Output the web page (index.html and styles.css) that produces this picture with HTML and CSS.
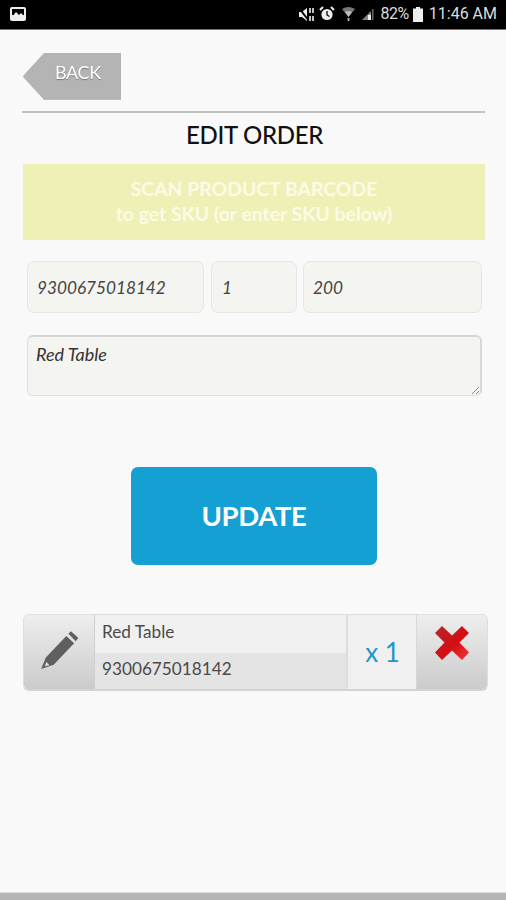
FILE: index.html
```html
<!DOCTYPE html>
<html lang="en">
<head>
<meta charset="utf-8">
<title>Edit Order</title>
<link rel="stylesheet" href="styles.css">
</head>
<body>
<div class="screen">
  <header class="status">
    <svg class="status-pic" width="18" height="16" viewBox="0 0 18 16"><rect x="1" y="1" width="16" height="14" rx="2" fill="#eee"/><rect x="3" y="3" width="12" height="6" fill="#000"/><path d="M3 11 L7 6 L10 9 L12 7 L15 10 V12 H3Z" fill="#eee"/></svg>
    <div class="status-right">
      <svg class="si-mute" width="17" height="15" viewBox="0 0 17 15"><path d="M1 5h3l5-4v13L4 10H1Z" fill="#eee"/><path d="M1 1 L11 14" stroke="#000" stroke-width="2"/><path d="M12 1v5M15 1v5M12 9v5M15 9v5" stroke="#eee" stroke-width="1.6"/></svg>
      <svg class="si-alarm" width="16" height="16" viewBox="0 0 16 16"><circle cx="8" cy="8.500" r="5.600" fill="#eee"/><path d="M8 5v4l2.500 1.500" stroke="#000" stroke-width="1.300" fill="none"/><path d="M1 4 L4 1M15 4 L12 1" stroke="#eee" stroke-width="2"/></svg>
      <svg class="si-wifi" width="15" height="16" viewBox="0 0 15 16"><path d="M1 3 Q7.500 -1 14 3 L7.500 11Z" fill="#777"/><path d="M4 6 Q7.500 4 11 6 L7.500 11Z" fill="#bbb"/><path d="M6.500 12h2v3h-2Z" fill="#aaa"/></svg>
      <svg class="si-signal" width="14" height="13" viewBox="0 0 14 13"><path d="M1 12 L10 3 V12Z" fill="#888"/><path d="M11 1h1.500v11H11Z" fill="#666"/><path d="M7 7h3v5H7Z" fill="#eee"/></svg>
      <span class="status-text pct">82%</span>
      <svg class="si-batt" width="10" height="15" viewBox="0 0 10 15"><path d="M3 0h4v1.500h3V15H0V1.500h3Z" fill="#eee"/></svg>
      <span class="status-text">11:46 AM</span>
    </div>
  </header>

  <main class="content">
    <div class="back-wrap">
      <a class="back"><span>BACK</span></a>
    </div>
    <hr class="rule">
    <h1 class="title">EDIT ORDER</h1>
    <div class="banner">SCAN PRODUCT BARCODE<br>to get SKU (or enter SKU below)</div>
    <div class="fields">
      <div class="field f-sku">9300675018142</div>
      <div class="field f-qty">1</div>
      <div class="field f-price">200</div>
    </div>
    <div class="area">Red Table
      <svg class="grip" width="9" height="9" viewBox="0 0 9 9"><path d="M1 8 L8 1M5 8 L8 5" stroke="#888" stroke-width="1"/></svg>
    </div>
    <button class="update">UPDATE</button>
    <div class="item">
      <div class="tool edit">
        <svg width="42" height="44" viewBox="0 0 40 42"><path d="M6.500 29 L26 8.500 L33.500 15.500 L14 36 L2 40 Z" fill="#5f5f5f"/><path d="M28 6.500 L30.500 4 L37.500 10.500 L35 13.500Z" fill="#5f5f5f"/><path d="M7 33.500 L10 36.500 L5.500 37.500Z" fill="#ddd"/></svg>
      </div>
      <div class="item-info">
        <div class="item-name">Red Table</div>
        <div class="item-sku">9300675018142</div>
      </div>
      <div class="item-qty">x 1</div>
      <div class="tool del">
        <svg width="36" height="36" viewBox="0 0 36 36"><defs><linearGradient id="xg" x1="0" y1="0" x2="1" y2="1"><stop offset="0" stop-color="#b5282c"/><stop offset=".55" stop-color="#d40d12"/><stop offset="1" stop-color="#f4383c"/></linearGradient></defs><path d="M8 1 L18 10.500 L28 1 L35 8 L25.500 17.500 L35 27.500 L28 35 L18 25.500 L8 35 L1 27.500 L10.500 17.500 L1 8Z" fill="url(#xg)"/></svg>
      </div>
    </div>
  </main>
  <footer class="navbar"></footer>
</div>
</body>
</html>
```
FILE: styles.css
```css
* { box-sizing: border-box; }
html, body { margin: 0; padding: 0; }
body { font-family: Lato, "Open Sans", sans-serif; background: #f9f9f9; }
.screen { width: 506px; height: 900px; display: flex; flex-direction: column; overflow: hidden; }

.status { height: 30px; flex: none; background: #000; border-bottom: 1px solid #777; display: flex; align-items: center; justify-content: space-between; padding: 0 9px 1px 9px; }
.status-pic { display: block; }
.status-right { display: flex; align-items: center; }
.status-text { font-family: Roboto, sans-serif; font-size: 16px; color: #dcdcdc; line-height: 20px; white-space: nowrap; }
.si-mute { margin-right: 4px; }
.si-alarm { margin-right: 6px; }
.si-wifi { margin-right: 5px; }
.si-signal { margin-right: 6px; }
.pct { letter-spacing: -0.5px; margin-right: 4px; }
.si-batt { margin-right: 6px; }

.content { flex: 1; padding: 23px 19px 0 23px; display: flex; flex-direction: column; align-items: flex-start; }
.back-wrap { filter: drop-shadow(0 1px 0.5px rgba(0,0,0,.25)); height: 46px; }
.back { display: flex; align-items: center; width: 98px; height: 46px; background: #b4b4b4; clip-path: polygon(0 50%, 21px 0, 100% 0, 100% 100%, 21px 100%); padding: 0 0 9px 32px; }
.back span { color: #fff; font-size: 18px; letter-spacing: -0.4px; text-shadow: 0 1px 1px rgba(0,0,0,.35); }
.rule { width: 463px; height: 2px; margin: 12px 0 0 -1px; border: 0; background: #c2c2c2; }
.title { width: 463px; margin: 7px 0 0; font-size: 24px; line-height: 30px; font-weight: 500; letter-spacing: -0.3px; text-align: center; color: #111; }
.banner { width: 462px; height: 76px; margin-top: 14px; padding-top: 12px; background: #eff0b6; color: #fbfbe6; font-size: 19.400px; line-height: 25px; font-weight: 700; text-align: center; }
.fields { display: flex; gap: 6px; margin: 21px 0 0 4px; }
.field { height: 52px; background: #f4f4f1; border: 1px solid #e6e6e6; border-radius: 7px; font-style: italic; font-size: 17.200px; color: #444; display: flex; align-items: center; padding-left: 9px; }
.f-sku { width: 177px; margin-right: 1px; }
.f-qty { width: 86px; padding-left: 10px; }
.f-price { width: 179px; padding-left: 9px; }
.area { position: relative; width: 455px; height: 61px; margin: 22px 0 0 4px; background: #f4f4f1; border: 1px solid #e0e0e0; border-top: 2px solid #d6d6d6; border-right: 2px solid #d8d8d8; border-radius: 6px; font-style: italic; font-size: 18px; line-height: 20px; color: #333; padding: 7px 8px; }
.grip { position: absolute; right: 0; bottom: 0; }
.update { display: block; width: 246px; height: 98px; margin: 71px 0 0 108px; border: 0; border-radius: 7px; background: #14a0d3; color: #fff; font-family: Lato, sans-serif; font-size: 27.500px; font-weight: 700; letter-spacing: -0.4px; padding: 0 0 2px; }
.item { display: flex; width: 465px; height: 77px; margin-top: 49px; border: 1px solid #dedede; border-bottom: 2px solid #d4d4d4; border-radius: 6px; overflow: hidden; background: #efefef; }
.tool { flex: none; background: linear-gradient(#eeeeee, #cbcbcb); display: flex; }
.edit { width: 71px; align-items: center; justify-content: center; border-right: 1px solid #cfcfcf; padding: 0 0 6px 1px; }
.item-info { width: 253px; flex: none; display: flex; flex-direction: column; font-size: 17.200px; color: #4a4a4a; border-right: 2px solid #dcdcdc; }
.item-name { height: 38px; background: #f0f0f0; padding: 6px 0 0 7px; line-height: 22px; }
.item-sku { flex: 1; background: #e4e4e4; padding: 5px 0 0 7px; line-height: 22px; }
.item-qty { width: 69px; flex: none; font-size: 26px; color: #2196c9; display: flex; align-items: center; justify-content: center; padding: 0 0 1px 1px; border-right: 1px solid #d8d8d8; background: #f0f0f0; }
.del { flex: 1; justify-content: center; align-items: flex-start; padding: 10px 1px 0 0; }

.navbar { height: 8px; flex: none; background: #b5b5b5; border-top: 1px solid #ddd; }
```
